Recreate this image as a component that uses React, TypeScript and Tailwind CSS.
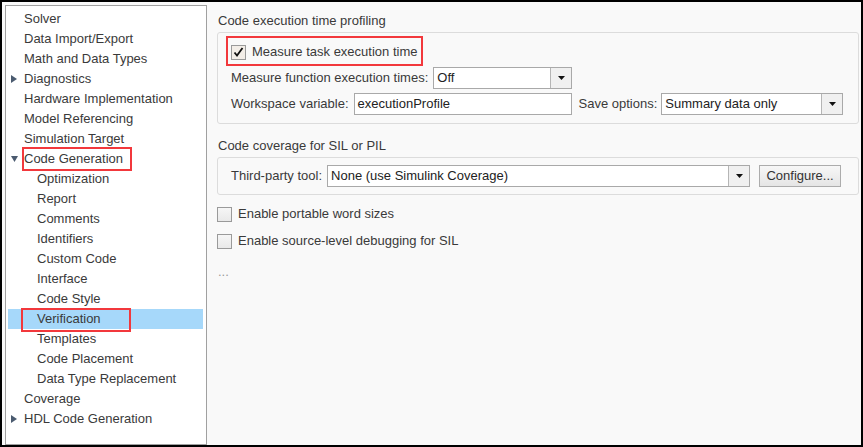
import React from "react";

const font = { fontFamily: '"Liberation Sans", Arial, sans-serif' };

function TriRight() {
  return (
    <svg width="6" height="8" viewBox="0 0 6 8" className="block">
      <path d="M0 0 L6 4 L0 8 Z" fill="#4b5b70" />
    </svg>
  );
}
function TriDown() {
  return (
    <svg width="7" height="6" viewBox="0 0 7 6" className="block">
      <path d="M0 0 L7 0 L3.5 6 Z" fill="#4b5b70" />
    </svg>
  );
}

type Item = { label: string; level: 0 | 1; tri?: "right" | "down"; selected?: boolean; boxed?: boolean };

const items: Item[] = [
  { label: "Solver", level: 0 },
  { label: "Data Import/Export", level: 0 },
  { label: "Math and Data Types", level: 0 },
  { label: "Diagnostics", level: 0, tri: "right" },
  { label: "Hardware Implementation", level: 0 },
  { label: "Model Referencing", level: 0 },
  { label: "Simulation Target", level: 0 },
  { label: "Code Generation", level: 0, tri: "down", boxed: true },
  { label: "Optimization", level: 1 },
  { label: "Report", level: 1 },
  { label: "Comments", level: 1 },
  { label: "Identifiers", level: 1 },
  { label: "Custom Code", level: 1 },
  { label: "Interface", level: 1 },
  { label: "Code Style", level: 1 },
  { label: "Verification", level: 1, selected: true, boxed: true },
  { label: "Templates", level: 1 },
  { label: "Code Placement", level: 1 },
  { label: "Data Type Replacement", level: 1 },
  { label: "Coverage", level: 0 },
  { label: "HDL Code Generation", level: 0, tri: "right" },
];

function TreeRow({ it }: { it: Item }) {
  return (
    <div
      className={
        "relative flex items-center h-[20px] ml-[2px] mr-[3px] " +
        (it.selected ? "bg-[#a6d8fa]" : "")
      }
    >
      {it.level === 0 ? (
        <div className="w-[16px] h-[20px] flex items-center pl-[3px]">
          {it.tri === "right" ? <TriRight /> : it.tri === "down" ? <TriDown /> : null}
        </div>
      ) : (
        <div className="w-[29px] shrink-0" />
      )}
      <span className="text-[13px] leading-[16px] text-[#3a3a3a] whitespace-nowrap">{it.label}</span>
      {it.boxed && it.level === 0 && (
        <div className="absolute left-[14px] top-[-2px] w-[110px] h-[24px] border-[2px] border-[#f2383c] pointer-events-none" />
      )}
      {it.boxed && it.level === 1 && (
        <div className="absolute left-[13px] top-[-1px] w-[110px] h-[24px] border-[2px] border-[#f2383c] pointer-events-none" />
      )}
    </div>
  );
}

function DropArrow() {
  return (
    <svg width="7" height="4" viewBox="0 0 7 4" className="block">
      <path d="M0 0 L7 0 L3.5 4 Z" fill="#111" />
    </svg>
  );
}

function Select({ value, width }: { value: string; width: number }) {
  return (
    <div
      className="flex h-[22px] bg-white border border-[#a9a9a9] shrink-0"
      style={{ width }}
    >
      <div className="flex-1 flex items-center pl-[3px] text-[13px] text-[#222] whitespace-nowrap overflow-hidden">
        {value}
      </div>
      <div className="w-[21px] border-l border-[#b5b5b5] bg-[#f0f0f0] flex items-center justify-center">
        <DropArrow />
      </div>
    </div>
  );
}

function Checkbox({ checked }: { checked?: boolean }) {
  return (
    <div
      className={
        "w-[15px] h-[15px] border border-[#9a9a9a] flex items-center justify-center shrink-0 " +
        (checked ? "bg-[#f3eee8]" : "bg-gradient-to-b from-[#f6f6f6] to-[#e9e9e9]")
      }
    >
      {checked && (
        <svg width="11" height="10" viewBox="0 0 11 10" className="block">
          <path d="M1.5 5.5 L4 8.5 L9.5 1" fill="none" stroke="#111" strokeWidth="1.8" />
        </svg>
      )}
    </div>
  );
}

export default function App() {
  return (
    <div
      className="w-[863px] h-[447px] border-2 border-black bg-[#f9f9f9] flex overflow-hidden"
      style={font}
    >
      {/* Left tree */}
      <div className="pl-[3px] pt-[3px] shrink-0 bg-[#f9f9f9]">
        <div className="w-[202px] h-[440px] bg-white border border-[#a0a0a0] pt-[3px]">
          {items.map((it) => (
            <TreeRow key={it.label} it={it} />
          ))}
        </div>
      </div>

      {/* Right panel */}
      <div className="flex-1 pl-[10px] pr-[2px] pt-[11px] text-[13px] text-[#3a3a3a]">
        <div className="h-[16px] leading-[16px] pl-[1px]">Code execution time profiling</div>
        <div className="mt-[3px] border border-[#dcdcdc] rounded-[3px] pl-[13px] pt-[8px] pb-[8px] flex flex-col gap-[4px]">
          <div className="relative h-[22px] flex items-center gap-[6px]">
            <Checkbox checked />
            <span className="leading-[16px]">Measure task execution time</span>
            <div className="absolute left-[-5px] top-[-5px] w-[197px] h-[30px] border-[2px] border-[#f2383c] pointer-events-none" />
          </div>
          <div className="h-[22px] flex items-center">
            <span className="whitespace-nowrap">Measure function execution times:</span>
            <div className="ml-[5px]">
              <Select value="Off" width={139} />
            </div>
          </div>
          <div className="h-[22px] flex items-center">
            <span className="whitespace-nowrap">Workspace variable:</span>
            <div className="ml-[5px] w-[218px] h-[22px] bg-white border border-[#a9a9a9] flex items-center pl-[3px] text-[#222]">
              executionProfile
            </div>
            <span className="ml-[7px] whitespace-nowrap">Save options:</span>
            <div className="ml-[4px]">
              <Select value="Summary data only" width={182} />
            </div>
          </div>
        </div>

        <div className="mt-[14px] h-[16px] leading-[16px] pl-[1px]">Code coverage for SIL or PIL</div>
        <div className="mt-[3px] border border-[#dcdcdc] rounded-[3px] pl-[13px] pt-[7px] pb-[7px]">
          <div className="h-[22px] flex items-center">
            <span className="whitespace-nowrap">Third-party tool:</span>
            <div className="ml-[5px]">
              <Select value="None (use Simulink Coverage)" width={423} />
            </div>
            <button className="ml-[9px] w-[82px] h-[22px] border border-[#acacac] bg-gradient-to-b from-[#f7f7f7] to-[#e5e5e5] text-[13px] text-[#333] flex items-center justify-center">
              Configure...
            </button>
          </div>
        </div>

        <div className="mt-[8px] flex flex-col gap-[5px]">
          <div className="h-[22px] flex items-center gap-[6px]">
            <Checkbox />
            <span>Enable portable word sizes</span>
          </div>
          <div className="h-[22px] flex items-center gap-[6px]">
            <Checkbox />
            <span>Enable source-level debugging for SIL</span>
          </div>
        </div>
        <div className="mt-[10px] h-[20px] leading-[20px] pl-[1px] text-[#9a9a9a]">...</div>
      </div>
    </div>
  );
}
